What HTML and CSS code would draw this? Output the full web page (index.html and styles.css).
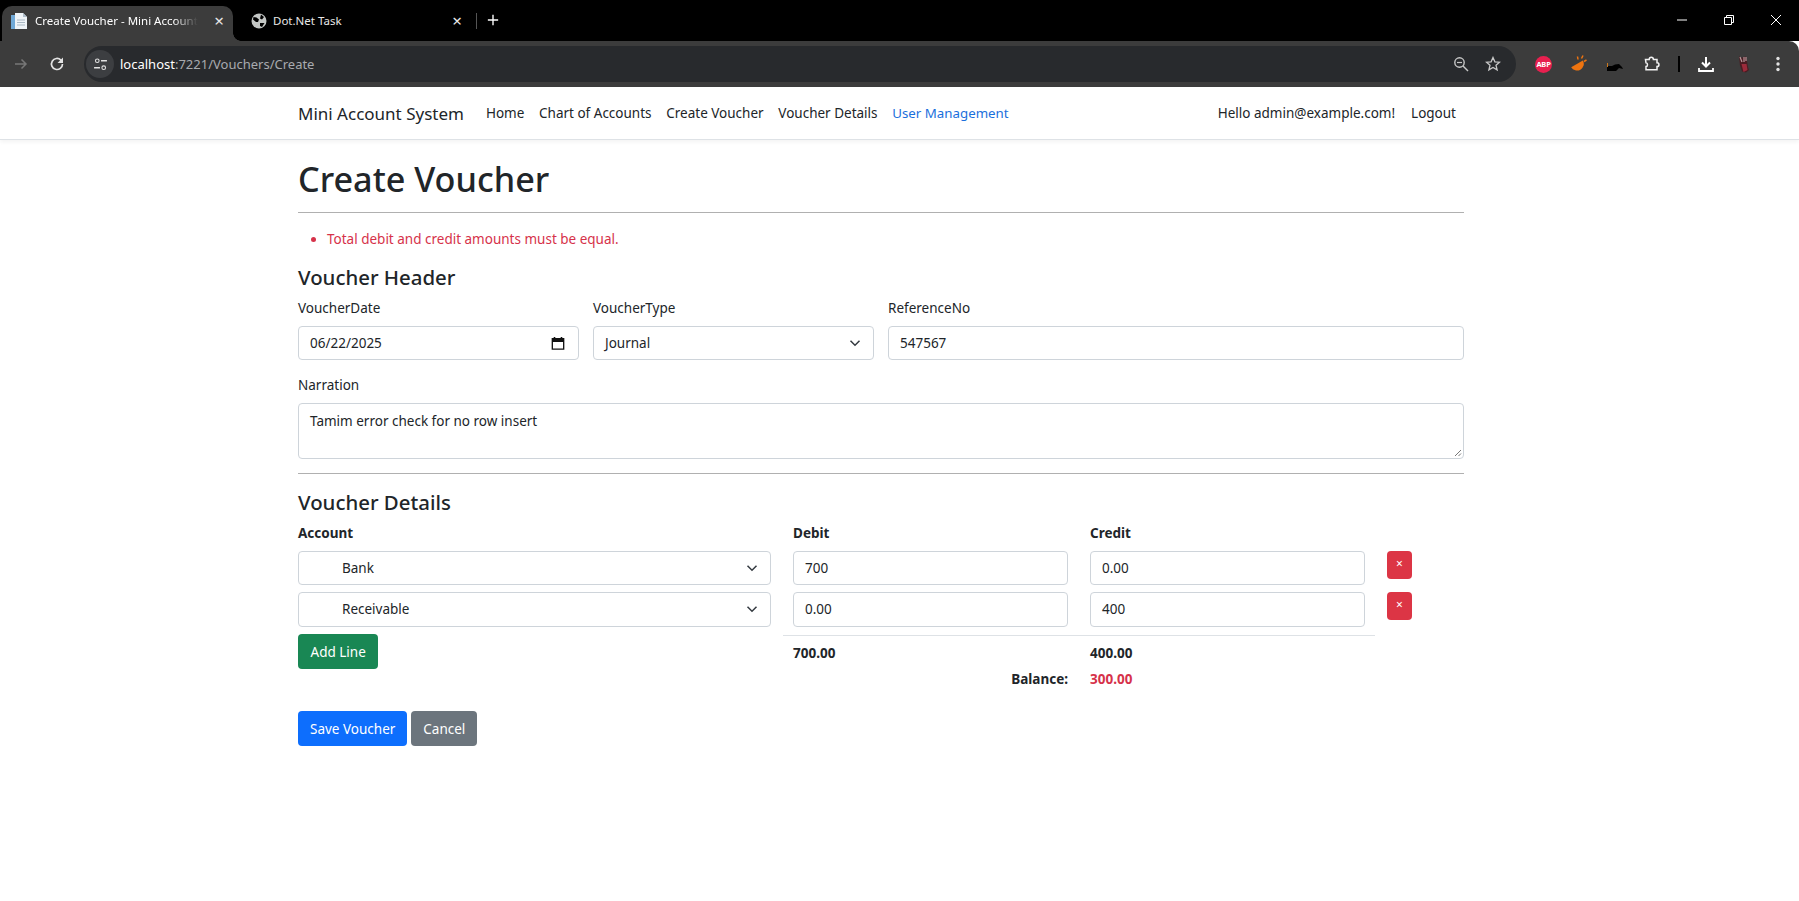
FILE: index.html
```html
<!DOCTYPE html>
<html lang="en">
<head>
  <meta charset="UTF-8" />
  <title>Create Voucher - Mini Account System</title>
  <link rel="stylesheet" href="styles.css">
</head>
<body>

<div class="tabstrip">
  <div class="tab active">
    <svg class="favicon" viewBox="0 0 16 16"><path d="M0 2h5v14H0z" fill="#6fa8d6"/><path d="M4 0h8l4 4v12H4z" fill="#eef3f7"/><path d="M12 0v4h4z" fill="#aebdca"/><path d="M6 7h8M6 9.500h8M6 12h8" stroke="#a9b8c4" stroke-width="1"/></svg>
    <span class="tab-title">Create Voucher - Mini Account</span>
    <span class="tab-close">×</span>
  </div>
  <div class="tab second">
    <svg class="favicon" viewBox="0 0 16 16"><circle cx="8" cy="8" r="7.500" fill="#c4c7c5"/><path d="M2.500 4l3 .5 2.500 2-1 2.500-2 0-3-2.500zM10 1.500l3 2.500-2 2.500-2-1zM9 10h4.500l-2.500 4-2-1z" fill="#000"/></svg>
    <span class="tab-title">Dot.Net Task</span>
    <span class="tab-close">×</span>
  </div>
  <span class="tab-sep"></span>
  <svg class="newtab" viewBox="0 0 14 14"><path d="M7 1v12M1 7h12" stroke="#fff" stroke-width="1.600"/></svg>
  <div class="window-btns">
    <svg viewBox="0 0 12 12"><path d="M1 6h10" stroke="#fff"/></svg>
    <svg viewBox="0 0 12 12"><path d="M1.500 3.500h7v7h-7zM3.500 3.500v-2h7v7h-2" stroke="#fff" fill="none"/></svg>
    <svg viewBox="0 0 12 12"><path d="M1 1l10 10M11 1L1 11" stroke="#fff"/></svg>
  </div>
</div>

<div class="toolbar">
  <svg class="tool-icon" viewBox="0 0 16 16"><path d="M2 8h11M8.500 3.500L13 8l-4.500 4.500" stroke="#777" stroke-width="1.500" fill="none"/></svg>
  <svg class="tool-icon" viewBox="0 0 16 16"><path d="M13.500 8a5.500 5.500 0 1 1-1.600-3.900L13.500 6" stroke="#e3e3e3" stroke-width="1.700" fill="none"/><path d="M14 1.500v5.500H8.500z" fill="#e3e3e3"/></svg>
  <div class="omnibox">
    <span class="site-info"><svg viewBox="0 0 14 14"><circle cx="4" cy="3.500" r="1.700" stroke="#e3e3e3" fill="none"/><path d="M7.500 3.500H13M1 10h5.500" stroke="#e3e3e3" stroke-width="1.300"/><circle cx="10" cy="10" r="1.700" stroke="#e3e3e3" fill="none"/></svg></span>
    <span class="url"><b>localhost</b>:7221/Vouchers/Create</span>
    <svg class="omni-icon zoom-icon" viewBox="0 0 16 16"><circle cx="6.500" cy="6.500" r="4.700" stroke="#c7c7c7" stroke-width="1.400" fill="none"/><path d="M10 10l5 5" stroke="#c7c7c7" stroke-width="1.400"/><path d="M4 6.500h5" stroke="#c7c7c7" stroke-width="1.200"/></svg>
    <svg class="omni-icon" viewBox="0 0 16 16"><path d="M8 1.500l1.900 4.300 4.600.4-3.500 3 1.100 4.600L8 11.400l-4.100 2.400L5 9.200l-3.500-3 4.600-.4z" stroke="#c7c7c7" stroke-width="1.300" fill="none"/></svg>
  </div>
  <div class="extensions">
    <span class="abp">ABP</span>
    <svg class="ext wide" viewBox="0 0 18 18"><path d="M1 8.500h13.500a6.750 6.750 0 0 1-13.500 0z" fill="#ee7410" transform="rotate(-30 8 10)"/><path d="M8 4.500l-.5-3M11.500 3.500l1.500-3M14 6.500l2.500-1.500" stroke="#ee7410" stroke-width="1.500"/></svg>
    <svg class="ext" viewBox="0 0 18 18"><path d="M2 11h5l3-1.500 4-.5 3 3 1 2-4-1-3 3H2z" fill="#000"/><path d="M2 8h1v4H2z" fill="#c9771c"/></svg>
    <svg class="ext puzzle" viewBox="0 0 18 18"><path d="M2.500 4.500h3.700c0-3 4.200-3 4.200 0h3.600v3.300c2.600 0 2.600 3.700 0 3.700v3.300H3v-3.300c2 0 2-3.700 0-3.700z" stroke="#f1f1f1" stroke-width="1.500" fill="none"/></svg>
    <span class="ext-sep"></span>
    <svg class="ext" viewBox="0 0 18 18"><path d="M9 2v9M5 7.500L9 11.500l4-4" stroke="#fff" stroke-width="2" fill="none"/><path d="M2 13v3h14v-3" stroke="#fff" stroke-width="1.800" fill="none"/></svg>
    <svg class="ext avatar" viewBox="0 0 18 18"><path d="M5 1l2 2 3-1 2-.5 1 4.500 1 6 1 3-3 2.500-4-1-2-6z" fill="#4a1c22"/><path d="M6 2l2 5M10 2v5M12 2l0 4" stroke="#b9969a" stroke-width="1.200"/><path d="M7.500 9l2 8 4-2-1-6z" fill="#9c2b3b"/></svg>
    <svg class="ext" viewBox="0 0 18 18"><circle cx="9" cy="3.500" r="1.700" fill="#e3e3e3"/><circle cx="9" cy="9" r="1.700" fill="#e3e3e3"/><circle cx="9" cy="14.500" r="1.700" fill="#e3e3e3"/></svg>
  </div>
</div>

<nav class="navbar">
  <div class="wrap nav-inner">
    <a class="brand">Mini Account System</a>
    <a class="nav-link">Home</a>
    <a class="nav-link">Chart of Accounts</a>
    <a class="nav-link">Create Voucher</a>
    <a class="nav-link">Voucher Details</a>
    <a class="nav-link blue">User Management</a>
    <a class="nav-link push">Hello admin@example.com!</a>
    <a class="nav-link">Logout</a>
  </div>
</nav>

<main class="wrap">
  <h1>Create Voucher</h1>
  <hr class="rule-top">
  <ul class="errors"><li>Total debit and credit amounts must be equal.</li></ul>

  <h4>Voucher Header</h4>
  <div class="header-row">
    <div>
      <label>VoucherDate</label>
      <div class="control">06/22/2025
        <svg class="cal" viewBox="0 0 16 16"><path d="M1.500 3h13v12h-13zM1.500 6h13" stroke="#111" stroke-width="1.500" fill="none"/><path d="M4 1v3M12 1v3" stroke="#111" stroke-width="1.800"/><rect x="1.500" y="3" width="13" height="3" fill="#111"/></svg>
      </div>
    </div>
    <div>
      <label>VoucherType</label>
      <div class="control">Journal<svg class="chev" viewBox="0 0 16 16"><path d="M2 5l6 6 6-6" stroke="#343a40" stroke-width="2" fill="none"/></svg></div>
    </div>
    <div>
      <label>ReferenceNo</label>
      <div class="control">547567</div>
    </div>
  </div>
  <label class="narr-label">Narration</label>
  <div class="control textarea">Tamim error check for no row insert
    <svg class="grip" viewBox="0 0 10 10"><path d="M9 3L3 9M9 6.500L6.500 9" stroke="#777"/></svg>
  </div>
  <hr class="rule-mid">

  <h4 class="details-title">Voucher Details</h4>
  <div class="lines">
    <b>Account</b><b>Debit</b><b>Credit</b><span></span>

    <div class="control indent">Bank<svg class="chev" viewBox="0 0 16 16"><path d="M2 5l6 6 6-6" stroke="#343a40" stroke-width="2" fill="none"/></svg></div>
    <div class="control">700</div>
    <div class="control">0.00</div>
    <button class="btn-x">×</button>

    <div class="control indent tall">Receivable<svg class="chev" viewBox="0 0 16 16"><path d="M2 5l6 6 6-6" stroke="#343a40" stroke-width="2" fill="none"/></svg></div>
    <div class="control tall">0.00</div>
    <div class="control tall">400</div>
    <button class="btn-x">×</button>

    <div class="add-cell"><button class="btn green">Add Line</button></div>
    <div class="totals">
      <b>700.00</b><b>400.00</b>
      <b class="bal-label">Balance:</b><b class="bal-value">300.00</b>
    </div>
  </div>

  <div class="actions">
    <button class="btn blue-bg">Save Voucher</button>
    <button class="btn grey">Cancel</button>
  </div>
</main>

</body>
</html>
```

FILE: styles.css
```css
* {
  box-sizing: border-box;
}
html, body {
  height: 100%;
}
body {
  margin: 0;
  background: #fff;
  color: #212529;
  font-family: "Noto Sans", "Open Sans", sans-serif;
  font-size: 13.5px;
  overflow: hidden;
}
b {
  font-weight: 700;
}

/* browser chrome */
.tabstrip {
  height: 41px;
  background: #000;
  display: flex;
  align-items: flex-end;
  padding-left: 2px;
  color: #e8e8e8;
}
.tab {
  width: 231px;
  height: 35px;
  display: flex;
  align-items: center;
  padding: 0 9px 6px 9px;
  font-size: 11.5px;
  position: relative;
}
.tab.second {
  width: 235px;
  padding: 0 6px 6px 18px;
}
.tab.active {
  background: #3c3c3c;
  border-radius: 10px 10px 0 0;
  color: #fff;
}
/* small flare where the active tab meets the toolbar */
.tab.active::after {
  content: "";
  position: absolute;
  right: -8px;
  bottom: 0;
  width: 8px;
  height: 8px;
  background: radial-gradient(circle at 100% 0, #000 7.500px, #3c3c3c 8px);
}
.favicon {
  width: 16px;
  height: 16px;
  margin-right: 8px;
  flex: none;
}
.tab.second .favicon {
  margin-right: 6px;
}
.tab-title {
  flex: 1;
  white-space: nowrap;
}
.active .tab-title {
  -webkit-mask-image: linear-gradient(to right, #000 85%, transparent 100%);
  mask-image: linear-gradient(to right, #000 85%, transparent 100%);
  flex: none;
  margin-right: auto;
}
.tab-close {
  font-size: 17px;
  line-height: 1;
  color: #e8e8e8;
}
.tab-sep {
  width: 1px;
  height: 16px;
  background: #555;
  margin: 0 0 12px 8px;
}
.newtab {
  width: 12px;
  height: 12px;
  margin: 0 0 15px 10px;
}
.window-btns {
  margin-left: auto;
  display: flex;
  gap: 35px;
  padding: 0 17px 15px 0;
}
.window-btns svg {
  width: 12px;
  height: 12px;
  display: block;
}
.toolbar {
  height: 46px;
  background: #3c3c3c;
  border-radius: 0 10px 0 0;
  display: flex;
  align-items: center;
  padding-left: 13px;
}
.tool-icon {
  width: 16px;
  height: 16px;
  margin-right: 20px;
  flex: none;
}
.tool-icon + .tool-icon {
  margin-right: 19px;
}
.omnibox {
  width: 1432px;
  height: 36px;
  background: #282a2d;
  border-radius: 18px;
  display: flex;
  align-items: center;
  padding: 0 15px 0 2px;
  color: #a8abaf;
  font-size: 13px;
  flex: none;
}
.site-info {
  width: 28px;
  height: 28px;
  border-radius: 50%;
  background: #3c3e41;
  display: flex;
  align-items: center;
  justify-content: center;
  margin-right: 6px;
}
.site-info svg {
  width: 15px;
  height: 15px;
}
.url b {
  color: #fff;
  font-weight: 400;
}
.omni-icon {
  width: 16px;
  height: 16px;
  margin-left: 16px;
}
.zoom-icon {
  margin-left: auto;
}
.extensions {
  display: flex;
  align-items: center;
  gap: 17px;
  margin-left: 19px;
}
.abp {
  width: 17px;
  height: 17px;
  border-radius: 50%;
  background: #e8204f;
  color: #fff;
  font-size: 7.500px;
  font-weight: 700;
  letter-spacing: -.2px;
  text-align: center;
  line-height: 17px;
}
.ext {
  width: 18px;
  height: 18px;
  flex: none;
}
.ext.wide {
  margin-left: 1px;
}
.ext.puzzle {
  margin-left: 3px;
}
.ext.avatar {
  margin-left: 2px;
  filter: blur(.4px);
}
.ext-sep {
  width: 2px;
  height: 16px;
  background: #000;
}
.navbar {
  height: 53px;
  background: #fff;
  border-bottom: 1px solid #dee2e6;
  box-shadow: 0 2px 4px rgba(0, 0, 0, .05);
}
.wrap {
  width: 1166px;
  margin-left: 298px;
}
.nav-inner {
  display: flex;
  align-items: center;
  height: 100%;
}
.brand {
  font-size: 17px;
  margin-right: 22px;
}
.nav-link {
  margin-right: 14.700px;
  font-size: 13.500px;
}
.nav-link.blue {
  color: #1a6fdc;
  font-size: 13.300px;
}
.nav-link.push {
  margin-left: auto;
  margin-right: 16px;
}
.navbar .nav-link:last-child {
  margin-right: 8px;
}

/* page */
h1 {
  margin: 17px 0 0;
  font-size: 34.200px;
  line-height: 44px;
  font-weight: 500;
}
hr {
  border: 0;
  border-top: 1px solid #b0b0b0;
  margin: 0;
}
.rule-top {
  margin-top: 11px;
}
.errors {
  margin: 16px 0 0;
  padding-left: 29px;
  color: #d6324a;
  line-height: 20px;
}
h4 {
  margin: 14px 0 0;
  font-size: 20.400px;
  line-height: 28px;
  font-weight: 500;
}
label {
  display: block;
  line-height: 20px;
}
.header-row {
  display: grid;
  grid-template-columns: 281px 281px 576px;
  gap: 14px;
  margin-top: 7px;
}
.header-row label {
  margin-bottom: 8px;
}
.control {
  position: relative;
  height: 34px;
  border: 1px solid #ced4da;
  border-radius: 4px;
  padding: 0 11px;
  line-height: 32px;
  background: #fff;
}
.control.tall {
  height: 35px;
  line-height: 33px;
}
.chev {
  position: absolute;
  right: 12px;
  top: 10px;
  width: 12px;
  height: 12px;
}
.cal {
  position: absolute;
  right: 13px;
  top: 9px;
  width: 14px;
  height: 14px;
}
.narr-label {
  margin: 15px 0 8px;
}
.textarea {
  height: 56px;
  line-height: 20px;
  padding-top: 7px;
}
.grip {
  position: absolute;
  right: 1px;
  bottom: 1px;
  width: 10px;
  height: 10px;
}
.rule-mid {
  margin-top: 14px;
}
.details-title {
  margin-top: 14px;
}
.lines {
  display: grid;
  grid-template-columns: 473px 275px 275px 25px;
  column-gap: 22px;
  row-gap: 7px;
  margin-top: 7px;
  align-items: start;
}
.lines > b {
  line-height: 20px;
  margin-bottom: 1px;
}
.indent {
  padding-left: 43px;
}
.btn-x {
  width: 25px;
  height: 28px;
  border: 0;
  border-radius: 4px;
  background: #dc3545;
  color: #fff;
  font-family: inherit;
  font-size: 12px;
  padding: 0 0 4px;
}
.add-cell {
  padding-top: 0;
}
.totals {
  grid-column: 2 / 4;
  margin: 1px -10px 0;
  padding: 7px 10px 0;
  border-top: 1px solid #dee2e6;
  display: grid;
  grid-template-columns: 275px 275px;
  column-gap: 22px;
  row-gap: 6px;
  line-height: 20px;
}
.bal-label {
  text-align: right;
}
.bal-value {
  color: #d6324a;
}
.btn {
  height: 35px;
  border: 0;
  border-radius: 4px;
  color: #fff;
  font-family: inherit;
  font-size: 13.500px;
  padding: 0 12px;
}
.green {
  background: #198754;
  padding: 0 12.500px;
}
.blue-bg {
  background: #0d6efd;
}
.grey {
  background: #6c757d;
}
.actions {
  display: flex;
  gap: 4px;
  margin-top: 22px;
}
```
